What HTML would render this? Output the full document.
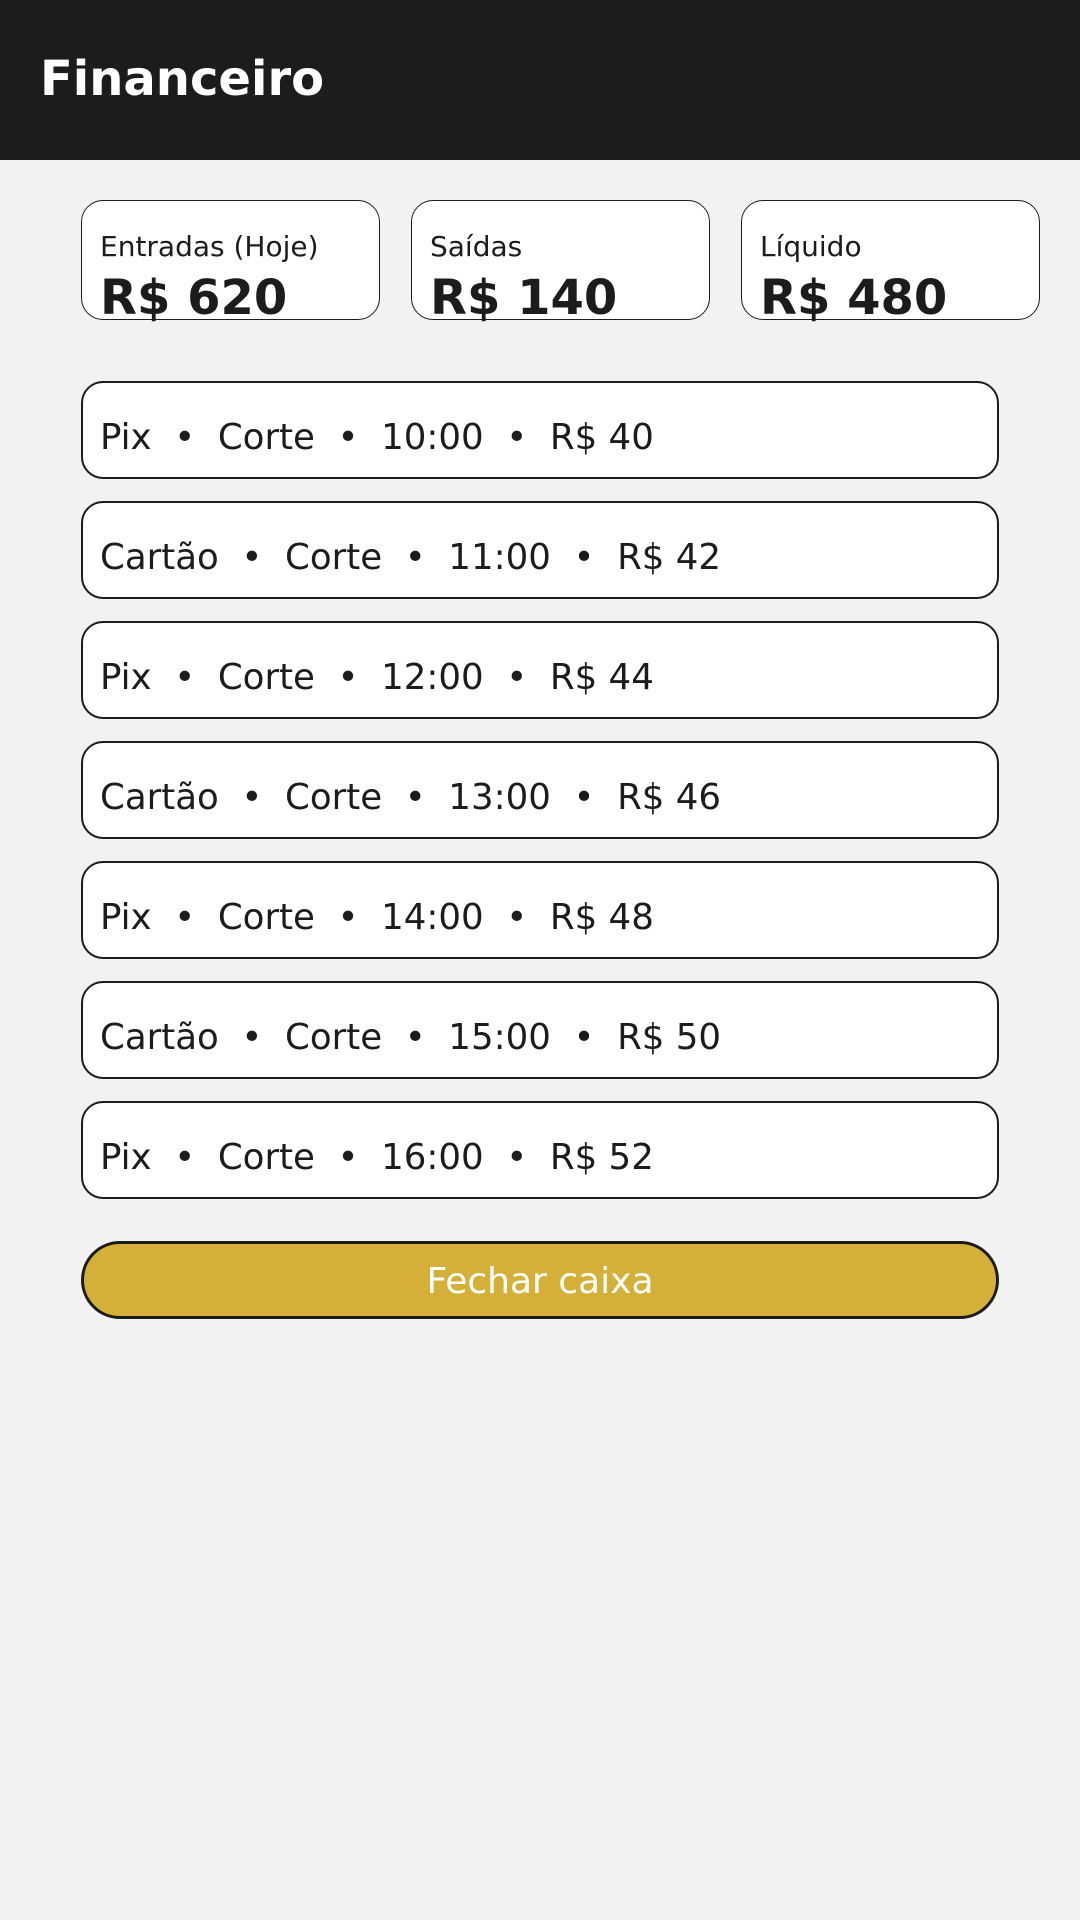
<!DOCTYPE html>
<html><head><meta charset="utf-8"><style>
*{margin:0;padding:0;box-sizing:border-box}
body{width:1080px;height:1920px;background:#f2f2f2;font-family:"DejaVu Sans","Liberation Sans",sans-serif;color:#1c1c1c;position:relative;overflow:hidden}
.hdr{position:absolute;left:0;top:0;width:1080px;height:160px;background:#1c1c1c}
.hdr h1{position:absolute;left:40px;top:47px;font-size:48px;font-weight:bold;color:#fff;line-height:64px}
.card{position:absolute;top:200px;width:299px;height:120px;background:#fff;border:1.5px solid #1c1c1c;border-radius:22px}
.card .l{position:absolute;left:18px;top:29px;font-size:28px;line-height:34px}
.card .v{position:absolute;left:18px;top:67px;font-size:48px;font-weight:bold;line-height:60px;white-space:nowrap}
.row{position:absolute;left:81px;width:918px;height:98px;background:#fff;border:2px solid #1c1c1c;border-radius:22px}
.row span{position:absolute;left:17px;top:33px;font-size:35.6px;line-height:44px;white-space:pre}
.btn{position:absolute;left:81px;top:1241px;width:918px;height:78px;background:#d4b038;border:3px solid #1c1c1c;border-radius:39px;color:#fff;font-size:36px;text-align:center;line-height:76px}
</style></head><body>
<div class="hdr"><h1>Financeiro</h1></div>
<div class="card" style="left:81px"><div class="l">Entradas (Hoje)</div><div class="v">R$ 620</div></div>
<div class="card" style="left:411px"><div class="l">Saídas</div><div class="v">R$ 140</div></div>
<div class="card" style="left:741px"><div class="l">Líquido</div><div class="v">R$ 480</div></div>
<div class="row" style="top:381px"><span>Pix  •  Corte  •  10:00  •  R$ 40</span></div>
<div class="row" style="top:501px"><span>Cartão  •  Corte  •  11:00  •  R$ 42</span></div>
<div class="row" style="top:621px"><span>Pix  •  Corte  •  12:00  •  R$ 44</span></div>
<div class="row" style="top:741px"><span>Cartão  •  Corte  •  13:00  •  R$ 46</span></div>
<div class="row" style="top:861px"><span>Pix  •  Corte  •  14:00  •  R$ 48</span></div>
<div class="row" style="top:981px"><span>Cartão  •  Corte  •  15:00  •  R$ 50</span></div>
<div class="row" style="top:1101px"><span>Pix  •  Corte  •  16:00  •  R$ 52</span></div>
<div class="btn">Fechar caixa</div>
</body></html>
